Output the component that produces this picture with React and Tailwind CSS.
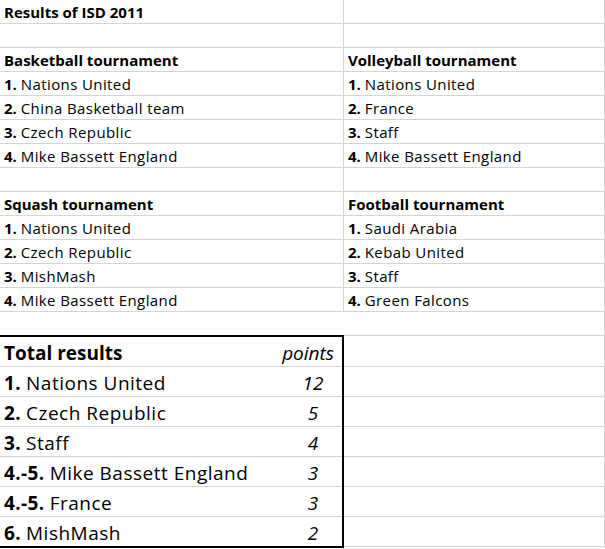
import React from "react";

const FONT = "font-['Open_Sans','Lato',sans-serif]";

function Cell({ children, wide }) {
  return (
    <div
      className={`${wide ? "w-[344px]" : "w-[261px]"} h-full border-r border-[#d4d4d4] pl-[4px] flex items-end pb-[1px] text-[15px] leading-[20px] text-black whitespace-nowrap`}
    >
      {children}
    </div>
  );
}

function Row({ a, b }) {
  return (
    <div className="flex h-[24px] border-b border-[#d4d4d4]">
      <Cell wide>{a}</Cell>
      <Cell>{b}</Cell>
    </div>
  );
}

const R = ({ n, t }) => (
  <span>
    <b>{n}</b> <span className="tracking-[0.4px]">{t}</span>
  </span>
);

const H = ({ t }) => <b>{t}</b>;

const totals = [
  ["1.", "Nations United", "12"],
  ["2.", "Czech Republic", "5"],
  ["3.", "Staff", "4"],
  ["4.-5.", "Mike Bassett England", "3"],
  ["4.-5.", "France", "3"],
  ["6.", "MishMash", "2"],
];

export default function App() {
  return (
    <div className={`w-[605px] h-[549px] bg-white overflow-hidden ${FONT}`}>
      <Row a={<H t="Results of ISD 2011" />} b={null} />
      <Row a={null} b={null} />
      <Row a={<H t="Basketball tournament" />} b={<H t="Volleyball tournament" />} />
      <Row a={<R n="1." t="Nations United" />} b={<R n="1." t="Nations United" />} />
      <Row a={<R n="2." t="China Basketball team" />} b={<R n="2." t="France" />} />
      <Row a={<R n="3." t="Czech Republic" />} b={<R n="3." t="Staff" />} />
      <Row a={<R n="4." t="Mike Bassett England" />} b={<R n="4." t="Mike Bassett England" />} />
      <Row a={null} b={null} />
      <Row a={<H t="Squash tournament" />} b={<H t="Football tournament" />} />
      <Row a={<R n="1." t="Nations United" />} b={<R n="1." t="Saudi Arabia" />} />
      <Row a={<R n="2." t="Czech Republic" />} b={<R n="2." t="Kebab United" />} />
      <Row a={<R n="3." t="MishMash" />} b={<R n="3." t="Staff" />} />
      <Row a={<R n="4." t="Mike Bassett England" />} b={<R n="4." t="Green Falcons" />} />

      <div className="flex">
        <div className="w-[344px] flex flex-col">
          <div className="h-[23px]" />
          <div className="border-t-2 border-r-2 border-b-2 border-black text-[19px] leading-[24px] text-black">
            <div className="h-[30px] border-b border-[#d4d4d4] flex items-end justify-between pl-[4px] pr-[8px] pb-[1px]">
              <b>Total results</b>
              <i>points</i>
            </div>
            {totals.map(([n, t, p], i) => (
              <div
                key={i}
                className={`${i < totals.length - 1 ? "h-[30px] border-b border-[#d4d4d4]" : "h-[29px]"} flex items-end pl-[4px] pb-[1px]`}
              >
                <span className="flex-1 whitespace-nowrap">
                  <b className="tracking-[0.4px]">{n}</b>{" "}
                  <span className="tracking-[0.5px]">{t}</span>
                </span>
                <i className="w-[40px] text-center mr-[9px]">{p}</i>
              </div>
            ))}
          </div>
        </div>
        <div className="w-[261px] flex flex-col border-r border-[#d4d4d4]">
          <div className="h-[24px] border-b border-[#d4d4d4]" />
          <div className="h-[31px] border-b border-[#d4d4d4]" />
          {[0, 1, 2, 3, 4, 5].map((i) => (
            <div key={i} className="h-[30px] border-b border-[#d4d4d4]" />
          ))}
        </div>
      </div>
    </div>
  );
}
